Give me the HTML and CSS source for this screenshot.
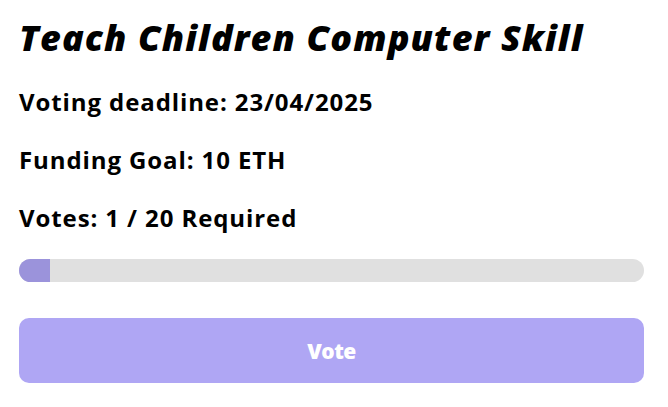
FILE: index.html
```html
<!DOCTYPE html>
<html>
<head>
<meta charset="utf-8">
<link rel="stylesheet" href="styles.css">
</head>
<body>
<div class="card">
  <h1 class="title">Teach Children Computer Skill</h1>
  <p class="info">Voting deadline: 23/04/2025</p>
  <p class="info">Funding Goal: 10 ETH</p>
  <p class="info">Votes: 1 / 20 Required</p>
  <div class="progress"><div class="progress-fill" style="width:5%"></div></div>
  <button class="vote-btn">Vote</button>
</div>
</body>
</html>
```
FILE: styles.css
```css
html, body {
  margin: 0;
  padding: 0;
  background: #fff;
}
body {
  font-family: "Open Sans", "Lato", sans-serif;
  color: #000;
}
.card {
  padding: 14px 24px 0 19px;
  display: flex;
  flex-direction: column;
}
.title {
  margin: 0;
  font-size: 36px;
  line-height: 48px;
  font-weight: 800;
  font-style: italic;
  letter-spacing: 1.1px;
}
.info {
  margin: 0;
  font-size: 24px;
  line-height: 30px;
  font-weight: 700;
  margin-top: 28px;
  letter-spacing: 0.9px;
}
.info:first-of-type {
  margin-top: 25px;
}
.progress {
  margin-top: 26px;
  height: 23px;
  border-radius: 12px;
  background: #e0e0e0;
  overflow: hidden;
}
.progress-fill {
  height: 100%;
  background: #9b93db;
}
.vote-btn {
  margin-top: 36px;
  height: 65px;
  border: none;
  border-radius: 10px;
  background: #afa6f4;
  color: #fff;
  font-family: inherit;
  font-size: 21px;
  font-weight: 800;
  letter-spacing: -0.5px;
}
```
